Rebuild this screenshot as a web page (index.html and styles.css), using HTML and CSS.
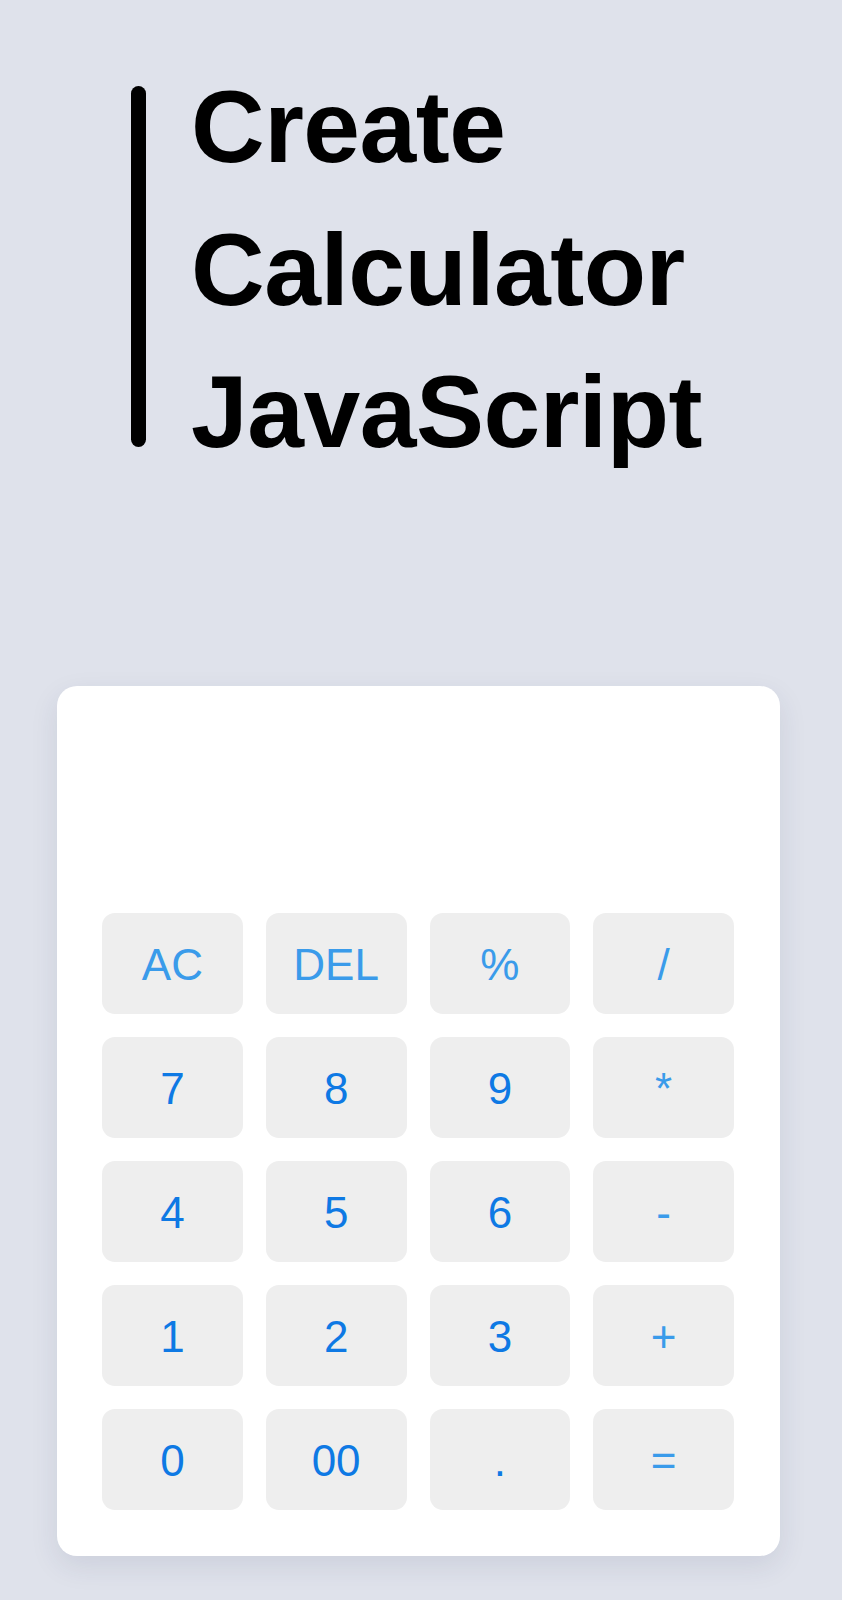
FILE: index.html
```html
<!DOCTYPE html>
<html lang="en">
<head>
<meta charset="utf-8">
<title>Create Calculator JavaScript</title>
<link rel="stylesheet" href="styles.css">
</head>
<body>
  <header class="title">
    <span class="title-bar"></span>
    <h1 class="title-text">Create<br>Calculator<br>JavaScript</h1>
  </header>
  <main class="stage">
    <section class="calc">
      <div class="display"></div>
      <div class="keys">
        <button class="key op">AC</button>
        <button class="key op">DEL</button>
        <button class="key op">%</button>
        <button class="key op">/</button>
        <button class="key num">7</button>
        <button class="key num">8</button>
        <button class="key num">9</button>
        <button class="key op">*</button>
        <button class="key num">4</button>
        <button class="key num">5</button>
        <button class="key num">6</button>
        <button class="key op">-</button>
        <button class="key num">1</button>
        <button class="key num">2</button>
        <button class="key num">3</button>
        <button class="key op">+</button>
        <button class="key num">0</button>
        <button class="key num">00</button>
        <button class="key num">.</button>
        <button class="key op">=</button>
      </div>
    </section>
  </main>
</body>
</html>
```

FILE: styles.css
```css
* { box-sizing: border-box; }

html, body {
  margin: 0;
  padding: 0;
  background: #dfe2eb;
  font-family: "Liberation Sans", Arial, Helvetica, sans-serif;
}

body {
  min-height: 1600px;
}

.title {
  display: flex;
  align-items: center;
  gap: 45px;
  padding: 56px 0 0 131px;
}

.title-bar {
  flex: none;
  width: 15px;
  height: 361px;
  margin-bottom: 6px;
  border-radius: 8px;
  background: #000;
}

.title-text {
  margin: 0;
  font-size: 102px;
  line-height: 142.5px;
  font-weight: 700;
  letter-spacing: -0.5px;
  color: #000;
}

.stage {
  padding: 202px 0 0 57px;
}

.calc {
  width: 723px;
  background: #ffffff;
  border-radius: 20px;
  padding: 45px 46px 46px 45px;
  box-shadow: 0 10px 28px rgba(40, 50, 90, 0.10);
}

.display {
  height: 182px;
}

.keys {
  display: grid;
  grid-template-columns: repeat(4, 1fr);
  grid-auto-rows: 101px;
  gap: 23px;
}

.key {
  border: none;
  margin: 0;
  padding: 4px 0 0;
  background: #eeeeee;
  border-radius: 13px;
  font-family: "Liberation Sans", Arial, Helvetica, sans-serif;
  font-size: 44px;
  font-weight: 400;
  display: flex;
  align-items: center;
  justify-content: center;
}

.key.op { color: #3a9bea; }
.key.num { color: #0e79e4; }
```
